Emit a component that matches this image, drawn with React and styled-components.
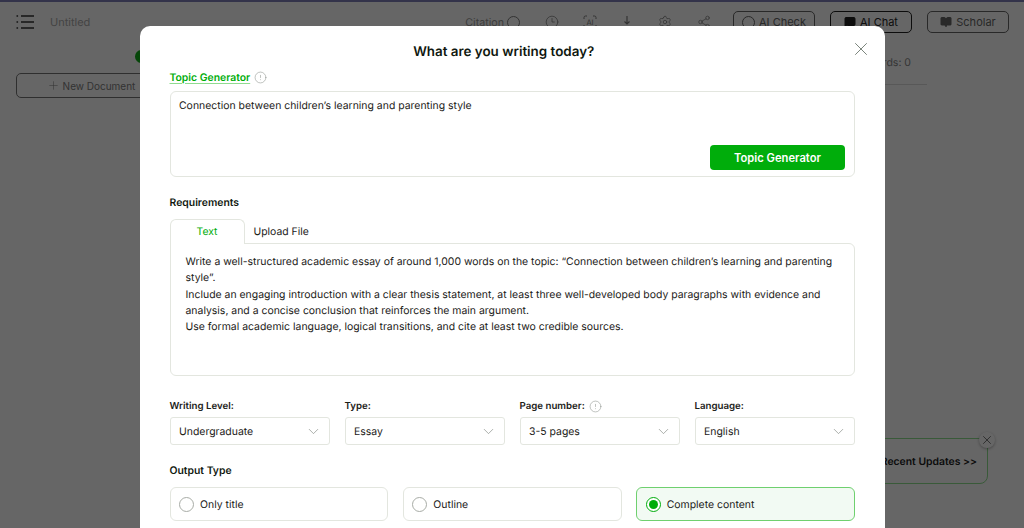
import React from "react";
import styled, { createGlobalStyle } from "styled-components";
import { Clock3, Settings, Share2, X, Plus, CircleAlert, ChevronDown, BookOpen, MessageSquare } from "lucide-react";

const Global = createGlobalStyle`
  html, body { margin: 0; padding: 0; background: #fff; }
  #root { width: 1024px; height: 528px; overflow: hidden; }
  * { box-sizing: border-box; }
  body { font-family: Inter, "Liberation Sans", sans-serif; text-rendering: geometricPrecision; }
`;

const Page = styled.div`
  position: relative;
  width: 1024px;
  height: 528px;
  overflow: hidden;
  background: #fff;
  color: #333;
  border-top: 2px solid #33334a;
`;

const TopBar = styled.header`
  display: flex;
  align-items: center;
  height: 40px;
  padding: 0 15px 0 16px;
`;

const MenuGlyph = styled.svg`
  width: 18px;
  height: 16px;
  margin-right: 16px;
`;

const DocName = styled.span`
  font-size: 11px;
  color: #aaa;
`;

const ToolGroup = styled.div`
  display: flex;
  align-items: center;
  margin-left: auto;
  color: #808080;
`;

const ToolLabel = styled.span`
  font-size: 10.7px;
  margin-right: 3px;
  color: #999;
`;

const ToolIcon = styled.span`
  display: flex;
  width: 14px;
  height: 14px;
  margin-left: ${p => p.$gap}px;
`;

const Ring = styled.span`
  display: inline-block;
  width: 13px;
  height: 13px;
  border: 1.2px solid currentColor;
  border-radius: 50%;
`;

const BarButton = styled.button`
  display: flex;
  align-items: center;
  justify-content: center;
  gap: 4px;
  width: 82px;
  height: 22px;
  padding: 0;
  margin-left: ${p => p.$gap}px;
  border: 1px solid ${p => p.$strong ? "#222" : "#666"};
  border-radius: 5px;
  background: #fff;
  color: ${p => p.$strong ? "#222" : "#666"};
  font: 400 11px Inter, sans-serif;
`;

const Body = styled.div`
  display: flex;
  height: 486px;
`;

const SideBar = styled.aside`
  width: 170px;
  padding: 31px 0 0 16px;
`;

const NewDocument = styled.button`
  display: flex;
  align-items: center;
  justify-content: center;
  gap: 3px;
  width: 150px;
  height: 25px;
  padding: 0;
  border: 1px solid #777;
  border-radius: 5px;
  background: #fff;
  color: #808080;
  font: 400 10px Inter, sans-serif;
`;

const Words = styled.div`
  margin-left: auto;
  width: 137px;
  height: 43px;
  margin-right: 97px;
  padding: 14px 16px 0 0;
  border-bottom: 1px solid #ddd;
  font-size: 10.5px;
  color: #888;
  text-align: right;
`;

const Toast = styled.div`
  position: absolute;
  right: 36px;
  top: 436px;
  width: 160px;
  height: 46px;
  display: flex;
  align-items: center;
  justify-content: flex-end;
  padding: 1px 10px 0 0;
  border: 1px solid #8fe08f;
  border-radius: 8px;
  background: #fff;
  font-size: 10.4px;
  font-weight: 600;
  color: #222;
`;

const ToastClose = styled.span`
  position: absolute;
  top: -7px;
  right: -8px;
  display: flex;
  align-items: center;
  justify-content: center;
  width: 16px;
  height: 16px;
  border-radius: 50%;
  background: #fff;
  color: #444;
  box-shadow: 0 1px 3px rgba(0,0,0,.3);
`;

const Dot = styled.span`
  position: absolute;
  left: 135px;
  top: 48px;
  width: 12px;
  height: 13px;
  border-radius: 50%;
  background: #10b018;
`;

const Overlay = styled.div`
  position: absolute;
  inset: 0;
  background: rgba(0, 0, 0, 0.6);
  padding: 24px 139px 0 140px;
`;

const Modal = styled.section`
  position: relative;
  height: 560px;
  padding: 0 30px 0 29.5px;
  background: #fff;
  border-radius: 10px;
  color: #1c2118;
`;

const Title = styled.h2`
  margin: 0;
  padding: 17px 17px 0 0;
  height: 42px;
  font-size: 13.4px;
  line-height: 18px;
  font-weight: 600;
  text-align: center;
  color: #10180f;
`;

const CloseButton = styled.span`
  position: absolute;
  top: 12px;
  right: 13px;
  display: flex;
  color: #6f7a70;
`;

const GreenLabelRow = styled.div`
  display: flex;
  align-items: center;
  gap: 4px;
  height: 23px;
  padding-bottom: 5px;
`;

const GreenLabel = styled.span`
  font-size: 10.4px;
  font-weight: 600;
  line-height: 13px;
  color: #00ad0b;
  text-decoration: underline;
  text-decoration-color: #8fdc8f;
  text-decoration-thickness: 1px;
  text-underline-offset: 2px;
`;

const Hint = styled(CircleAlert)`
  width: 13px;
  height: 13px;
  color: #8a8f8a;
`;

const TopicBox = styled.div`
  display: flex;
  flex-direction: column;
  justify-content: space-between;
  height: 86px;
  padding: 8px 9px 6px 8.5px;
  border: 1px solid #e3e6df;
  border-radius: 6px;
  font-size: 10.45px;
  color: #1c2118;
`;

const TopicText = styled.span`
  line-height: 11px;
`;

const GenerateButton = styled.button`
  align-self: flex-end;
  width: 135px;
  height: 25px;
  border: 0;
  border-radius: 4px;
  background: #00ad0b;
  color: #fff;
  font: 600 11.2px Inter, sans-serif;
`;

const SectionLabel = styled.h3`
  margin: 0;
  font-size: 10.4px;
  line-height: 14px;
  font-weight: 600;
  color: #10180f;
  padding-top: ${p => p.$top}px;
`;

const TabRow = styled.div`
  display: flex;
  align-items: flex-end;
  height: 24px;
  margin-top: 9px;
`;

const ActiveTab = styled.div`
  position: relative;
  z-index: 1;
  width: 75px;
  height: 25px;
  margin-bottom: -1px;
  padding-top: 5px;
  border: 1px solid #e3e6df;
  border-bottom: 0;
  border-radius: 6px 6px 0 0;
  background: #fff;
  color: #00ad0b;
  font-size: 10.4px;
  text-align: center;
`;

const Tab = styled.div`
  height: 24px;
  padding: 6px 0 0 9px;
  font-size: 10.4px;
  color: #1c2118;
`;

const RequirementBox = styled.div`
  height: 133px;
  padding: 10px 15px;
  border: 1px solid #e3e6df;
  border-radius: 0 6px 6px 6px;
  font-size: 10.45px;
  line-height: 16.25px;
  color: #1c2118;
`;

const FieldGrid = styled.div`
  display: grid;
  grid-template-columns: repeat(4, 160px);
  column-gap: 15px;
  margin-top: 22px;
`;

const Field = styled.div`
  display: flex;
  flex-direction: column;
`;

const FieldLabel = styled.label`
  display: flex;
  align-items: center;
  gap: 4px;
  height: 19px;
  padding-bottom: 3px;
  font-size: 9.7px;
  font-weight: 600;
  color: #1c2118;
`;

const Select = styled.div`
  display: flex;
  align-items: center;
  justify-content: space-between;
  height: 28px;
  padding: 0 7px 0 8.5px;
  border: 1px solid #e3e6df;
  border-radius: 3px;
  font-size: 10.45px;
  color: #1c2118;
`;

const Chevron = styled(ChevronDown)`
  width: 17px;
  height: 17px;
  color: #8a8f8a;
`;

const OptionRow = styled.div`
  display: grid;
  grid-template-columns: repeat(3, 1fr);
  column-gap: 14.5px;
  margin-top: 9px;
`;

const Option = styled.div`
  display: flex;
  align-items: center;
  gap: 6px;
  height: 34px;
  padding: 0 8.5px;
  border: 1px solid ${p => p.$on ? "#6fd06f" : "#e3e6df"};
  border-radius: 6px;
  background: ${p => p.$on ? "#f2faf3" : "#fff"};
  font-size: 10.45px;
  color: #1c2118;
`;

const Radio = styled.span`
  display: flex;
  align-items: center;
  justify-content: center;
  width: 15px;
  height: 15px;
  border: 1px solid ${p => p.$on ? "#00ad0b" : "#a8aca6"};
  border-radius: 50%;
  background: #fff;
  &::after {
    content: "";
    display: ${p => p.$on ? "block" : "none"};
    width: 9px;
    height: 9px;
    border-radius: 50%;
    background: #00ad0b;
  }
`;

const ScanIcon = () => (
  <svg viewBox="0 0 14 14" width="14" height="14" fill="none" stroke="currentColor" strokeWidth="1">
    <path d="M1 4V2.5A1.5 1.5 0 0 1 2.5 1H4M10 1h1.5A1.5 1.5 0 0 1 13 2.5V4M1 10v1.5A1.5 1.5 0 0 0 2.5 13H4M10 13h1.5a1.5 1.5 0 0 0 1.5-1.5V10" />
    <text x="7" y="10" fontSize="7.5" fill="currentColor" stroke="none" textAnchor="middle" fontFamily="Inter">AI</text>
  </svg>
);

const DownloadIcon = () => (
  <svg viewBox="0 0 14 14" width="14" height="14" fill="none" stroke="currentColor" strokeWidth="1.2">
    <path d="M7 1v8M4.5 6.5 7 9l2.5-2.5" />
    <path d="M1 12h1M12 12h1" />
  </svg>
);

const fields = [
  { label: "Writing Level:", value: "Undergraduate" },
  { label: "Type:", value: "Essay" },
  { label: "Page number:", value: "3-5 pages", hint: true },
  { label: "Language:", value: "English" },
];

const options = [
  { label: "Only title" },
  { label: "Outline" },
  { label: "Complete content", on: true },
];

export default function App() {
  return (
    <Page>
      <Global />
      <TopBar>
        <MenuGlyph viewBox="0 0 18 16" fill="none" stroke="#333" strokeWidth="1.6">
          <path d="M5 2h13M5 8h13M5 14h13" />
          <path d="M0.5 2h2M0.5 8h2M0.5 14h2" strokeDasharray="1.6 0.4" />
        </MenuGlyph>
        <DocName>Untitled</DocName>
        <ToolGroup>
          <ToolLabel>Citation</ToolLabel>
          <Ring />
          <ToolIcon $gap={25}><Clock3 size={14} strokeWidth={1.3} /></ToolIcon>
          <ToolIcon $gap={24}><ScanIcon /></ToolIcon>
          <ToolIcon $gap={23}><DownloadIcon /></ToolIcon>
          <ToolIcon $gap={24}><Settings size={14} strokeWidth={1.3} /></ToolIcon>
          <ToolIcon $gap={25}><Share2 size={14} strokeWidth={1.3} /></ToolIcon>
          <BarButton $gap={22}><Ring />AI Check</BarButton>
          <BarButton $gap={15} $strong><MessageSquare size={12} fill="#222" />AI Chat</BarButton>
          <BarButton $gap={15}><BookOpen size={12} fill="#666" />Scholar</BarButton>
        </ToolGroup>
      </TopBar>
      <Body>
        <SideBar>
          <NewDocument><Plus size={13} strokeWidth={1} />New Document</NewDocument>
        </SideBar>
        <Words>Words: 0</Words>
      </Body>
      <Dot />
      <Toast>
        Recent Updates &gt;&gt;
        <ToastClose><X size={14} strokeWidth={1.2} /></ToastClose>
      </Toast>
      <Overlay>
        <Modal>
          <Title>What are you writing today?</Title>
          <CloseButton><X size={22} strokeWidth={1} /></CloseButton>
          <GreenLabelRow>
            <GreenLabel>Topic Generator</GreenLabel>
            <Hint strokeWidth={1} />
          </GreenLabelRow>
          <TopicBox>
            <TopicText>Connection between children’s learning and parenting style</TopicText>
            <GenerateButton>Topic Generator</GenerateButton>
          </TopicBox>
          <SectionLabel $top={19}>Requirements</SectionLabel>
          <TabRow>
            <ActiveTab>Text</ActiveTab>
            <Tab>Upload File</Tab>
          </TabRow>
          <RequirementBox>
            Write a well-structured academic essay of around 1,000 words on the topic: “Connection between children’s learning and parenting style”.
            <br />
            Include an engaging introduction with a clear thesis statement, at least three well-developed body paragraphs with evidence and analysis, and a concise conclusion that reinforces the main argument.
            <br />
            Use formal academic language, logical transitions, and cite at least two credible sources.
          </RequirementBox>
          <FieldGrid>
            {fields.map(f => (
              <Field key={f.label}>
                <FieldLabel>{f.label}{f.hint && <Hint strokeWidth={1} />}</FieldLabel>
                <Select>{f.value}<Chevron strokeWidth={1} /></Select>
              </Field>
            ))}
          </FieldGrid>
          <SectionLabel $top={19}>Output Type</SectionLabel>
          <OptionRow>
            {options.map(o => (
              <Option key={o.label} $on={o.on}>
                <Radio $on={o.on} />
                {o.label}
              </Option>
            ))}
          </OptionRow>
        </Modal>
      </Overlay>
    </Page>
  );
}
